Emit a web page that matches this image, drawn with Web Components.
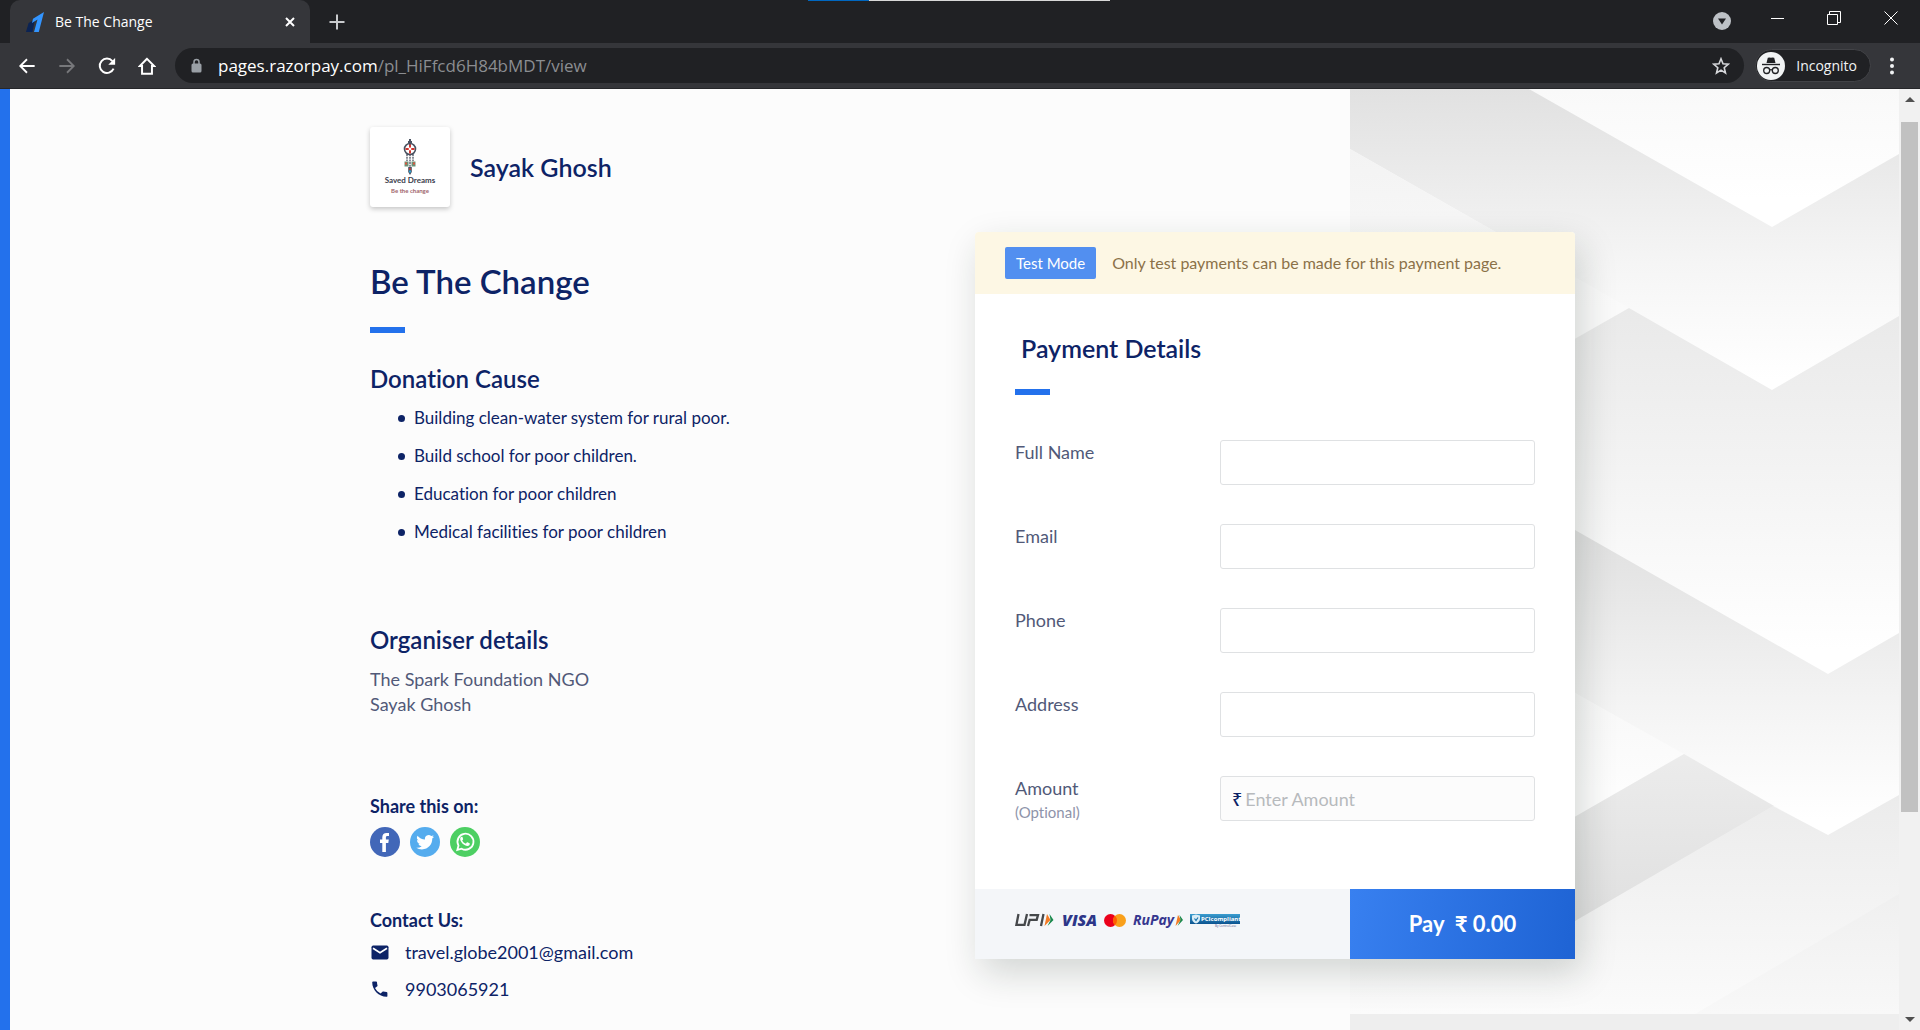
<!DOCTYPE html>
<html lang="en">
<head>
<meta charset="utf-8">
<title>Be The Change</title>
<style>
  :root {
    --navy: #0d2366;
    --blue: #2371ec;
    --muted: #515978;
    --ui-font: "Open Sans", "Noto Sans", sans-serif;
    --page-font: Lato, "Noto Sans", sans-serif;
  }
  html, body { height: 100%; margin: 0; }
  body { overflow: hidden; background: #fcfcfc; font-family: var(--page-font); font-variant-ligatures: none; }
</style>
</head>
<body>
<browser-window>
  <browser-tab slot="tabs">Be The Change</browser-tab>
  <payment-page>
    <chevron-backdrop slot="backdrop"></chevron-backdrop>
    <organiser-info slot="info"></organiser-info>
    <payment-card slot="card"></payment-card>
  </payment-page>
</browser-window>

<script>
const define = (name, html) => {
  const template = document.createElement('template');
  template.innerHTML = html;
  customElements.define(name, class extends HTMLElement {
    constructor() {
      super();
      this.attachShadow({ mode: 'open' }).append(template.content.cloneNode(true));
    }
  });
};

define('browser-tab', `
<style>
  :host { display: flex; align-items: center; box-sizing: border-box; width: 300px; height: 43px; padding: 0 13px 0 16px;
    background: #35363a; border-radius: 10px 10px 0 0; color: #fff; font-family: var(--ui-font); font-size: 14px; line-height: 20px; }
  .name { flex: 1; margin-left: 11px; }
  button { all: unset; display: flex; }
</style>
<svg width="18" height="20" viewBox="0 0 18 20"><path d="M0 20 2.600 11 9 7.500 6.500 20z" fill="#0b2353"/><path d="M18 0 12.800 20H8L11.500 7.500 6 11 7 6.800z" fill="#3395ff"/></svg>
<span class="name"><slot></slot></span>
<button aria-label="Close tab"><svg width="14" height="14" viewBox="0 0 14 14" stroke="#fff" stroke-width="2"><path d="M3 3l8 8M11 3l-8 8"/></svg></button>
`);

define('browser-window', `
<style>
  :host { display: flex; flex-direction: column; height: 100vh; }
  button { all: unset; display: flex; }
  .strip { position: relative; display: flex; align-items: center; height: 43px; padding-left: 10px; background: #202124; }
  .progress { position: absolute; top: 0; left: calc(50% - 152px); width: 302px; height: 1px; background: linear-gradient(90deg, #0067c0 61px, #d8d8d8 61px); }
  .new { margin-left: 19px; }
  .window { display: flex; align-items: center; gap: 43px; margin-left: auto; padding-right: 22px; height: 36px; align-self: flex-start; }
  .window .down { margin-top: 6px; margin-right: -3px; }
  .bar { display: flex; align-items: center; height: 45px; background: #35363a; border-bottom: 1px solid #26272a; padding: 0 25px 0 18px; }
  nav { display: flex; gap: 22px; width: 157px; }
  .address { flex: 1; display: flex; align-items: center; height: 35px; border-radius: 18px; padding: 0 14px 0 16px; background: #202124; font-family: var(--ui-font); font-size: 17px; line-height: 24px; }
  .address .url { flex: 1; margin-left: 15px; color: #8b8d91; }
  .address b { font-weight: 400; color: #fff; }
  .who { display: flex; align-items: center; gap: 11px; height: 31px; margin: 0 18px 0 11px; padding: 0 13px 0 1px; border: 1px solid #424347; border-radius: 17px; background: #202124; color: #f1f3f4; font-family: var(--ui-font); font-size: 14px; line-height: 20px; }
  .view { flex: 1; min-height: 0; display: grid; grid-template-columns: minmax(0, 1fr) 21px; }
  .scroll { display: flex; flex-direction: column; align-items: center; background: #f1f1f1; }
  .scroll button { align-items: center; }
  .scroll button:first-child { height: 21px; margin-bottom: 12px; }
  .scroll button:last-child { height: 21px; margin-top: auto; }
  .thumb { width: 17px; height: 73.3%; background: #c1c1c1; }
</style>
<div class="strip">
  <div class="progress"></div>
  <slot name="tabs"></slot>
  <button class="new" aria-label="New tab"><svg width="16" height="16" viewBox="0 0 16 16" stroke="#c8cacd" stroke-width="2"><path d="M8 .5v15M.5 8h15"/></svg></button>
  <div class="window">
    <button class="down" aria-label="Search tabs"><svg width="18" height="18" viewBox="0 0 18 18"><circle cx="9" cy="9" r="9" fill="#bdc1c6"/><path d="M5 6.500h8L9 12.500z" fill="#202124"/></svg></button>
    <button aria-label="Minimise"><svg width="13" height="13" viewBox="0 0 13 13"><path d="M0 6.500h13" stroke="#fff"/></svg></button>
    <button aria-label="Restore"><svg width="14" height="14" viewBox="0 0 14 14" fill="none" stroke="#fff"><path d="M.5 3.500h10v10H.5zM2.500 3V.5h11V11.500H11"/></svg></button>
    <button aria-label="Close"><svg width="14" height="14" viewBox="0 0 14 14" stroke="#fff"><path d="M.5.5l13 13M13.500.5l-13 13"/></svg></button>
  </div>
</div>
<div class="bar">
  <nav>
    <button aria-label="Back"><svg width="18" height="18" viewBox="0 0 20 20" fill="none" stroke="#fff" stroke-width="2"><path d="M18.500 10H3M10 2.500 2.500 10l7.500 7.500"/></svg></button>
    <button aria-label="Forward"><svg width="18" height="18" viewBox="0 0 20 20" fill="none" stroke="#77787b" stroke-width="2"><path d="M1.500 10H17M10 2.500l7.500 7.500-7.500 7.500"/></svg></button>
    <button aria-label="Reload"><svg width="18" height="18" viewBox="0 0 20 20"><path d="M17.300 13A8 8 0 1 1 16 4.500" fill="none" stroke="#fff" stroke-width="2.200"/><path d="M19 1V8.600h-7.600z" fill="#fff"/></svg></button>
    <button aria-label="Home"><svg width="18" height="18" viewBox="0 0 20 20" fill="none" stroke="#fff" stroke-width="2.200"><path d="M10 2 2 10h2.500v8.500h11V10H18z"/></svg></button>
  </nav>
  <div class="address" role="textbox" aria-label="Address">
    <svg width="12" height="16" viewBox="0 0 12 16"><rect y="5.500" x=".5" width="10" height="9" rx="1.500" fill="#9aa0a6"/><path d="M3 6V4a2.500 2.500 0 0 1 5 0v2" fill="none" stroke="#9aa0a6" stroke-width="1.500"/></svg>
    <span class="url"><b>pages.razorpay.com</b>/pl_HiFfcd6H84bMDT/view</span>
    <button aria-label="Bookmark"><svg width="18" height="18" viewBox="0 0 18 18" fill="none" stroke="#d5d7da" stroke-width="1.600"><path d="M9 1.800l2 5 5.300.4-4.100 3.500 1.300 5.300L9 13.100 4.500 16l1.300-5.300L1.700 7.200 7 6.800z"/></svg></button>
  </div>
  <button class="who"><svg width="28" height="28" viewBox="0 0 28 28"><circle cx="14" cy="14" r="14" fill="#f1f3f4"/><path d="M9.500 11l1.300-5.200q2-.8 3.200 0 1.200-.8 3.200 0L18.500 11z" fill="#202124"/><path d="M5 12.500h18" stroke="#202124" stroke-width="1.400"/><g fill="none" stroke="#202124" stroke-width="1.300"><circle cx="9.700" cy="18.500" r="3"/><circle cx="18.300" cy="18.500" r="3"/><path d="M12.700 18q1.300-.8 2.600 0"/></g></svg>Incognito</button>
  <button aria-label="Menu"><svg width="6" height="18" viewBox="0 0 6 18" fill="#f1f3f4"><circle cx="3" cy="2.500" r="2"/><circle cx="3" cy="9" r="2"/><circle cx="3" cy="15.500" r="2"/></svg></button>
</div>
<div class="view">
  <slot></slot>
  <div class="scroll">
    <button aria-label="Scroll up"><svg width="10" height="5" viewBox="0 0 10 5"><path d="M0 5 5 0l5 5z" fill="#505050"/></svg></button>
    <div class="thumb"></div>
    <button aria-label="Scroll down"><svg width="10" height="5" viewBox="0 0 10 5"><path d="M0 0l5 5 5-5z" fill="#505050"/></svg></button>
  </div>
</div>
`);

define('payment-page', `
<style>
  :host { display: grid; grid-template-columns: minmax(0, 10fr) 605px 600px minmax(0, 9fr); grid-template-rows: minmax(0, 1fr);
    box-sizing: border-box; min-height: 0; border-left: 10px solid var(--blue); background: #fcfcfc; }
  ::slotted(*) { grid-row: 1; }
  ::slotted([slot=backdrop]) { grid-column: 3 / 5; margin-left: 375px; }
  ::slotted([slot=info]) { grid-column: 2; }
  ::slotted([slot=card]) { grid-column: 3; margin-top: 143px; align-self: start; }
</style>
<slot name="backdrop"></slot><slot name="info"></slot><slot name="card"></slot>
`);

define('chevron-backdrop', `
<style>
  :host { display: flex; flex-direction: column; min-height: 0; background: #eee; }
  svg { display: block; width: 100%; height: 925px; }
</style>
<svg viewBox="0 0 549 925" preserveAspectRatio="none" aria-hidden="true">
  <defs>
    <linearGradient id="g0" gradientUnits="userSpaceOnUse" x1="400" y1="0" x2="400" y2="110"><stop stop-color="#f9f9f9"/><stop offset="1" stop-color="#fff"/></linearGradient>
    <linearGradient id="g1" gradientUnits="userSpaceOnUse" x1="0" y1="0" x2="0" y2="290"><stop stop-color="#e1e1e1"/><stop offset=".6" stop-color="#f5f5f5"/><stop offset="1" stop-color="#fff"/></linearGradient>
    <linearGradient id="g1b" gradientUnits="userSpaceOnUse" x1="0" y1="60" x2="0" y2="220"><stop stop-color="#f3f3f3"/><stop offset="1" stop-color="#fafafa"/></linearGradient>
    <linearGradient id="g2" gradientUnits="userSpaceOnUse" x1="0" y1="200" x2="0" y2="560"><stop stop-color="#e8e8e8"/><stop offset=".5" stop-color="#f3f3f3"/><stop offset="1" stop-color="#fff"/></linearGradient>
    <linearGradient id="g3" gradientUnits="userSpaceOnUse" x1="0" y1="450" x2="0" y2="730"><stop stop-color="#e1e1e1"/><stop offset=".6" stop-color="#f4f4f4"/><stop offset="1" stop-color="#fff"/></linearGradient>
    <linearGradient id="g3b" gradientUnits="userSpaceOnUse" x1="0" y1="590" x2="0" y2="700"><stop stop-color="#f7f7f7"/><stop offset="1" stop-color="#fdfdfd"/></linearGradient>
    <linearGradient id="g4" gradientUnits="userSpaceOnUse" x1="0" y1="660" x2="0" y2="830"><stop stop-color="#ececec"/><stop offset="1" stop-color="#e0e0e0"/></linearGradient>
    <linearGradient id="g5" gradientUnits="userSpaceOnUse" x1="0" y1="700" x2="0" y2="925"><stop stop-color="#ebebeb"/><stop offset="1" stop-color="#fbfbfb"/></linearGradient>
    <linearGradient id="g6" gradientUnits="userSpaceOnUse" x1="0" y1="800" x2="0" y2="925"><stop stop-color="#efefef"/><stop offset="1" stop-color="#f8f8f8"/></linearGradient>
  </defs>
  <rect width="549" height="925" fill="#fafafa"/>
  <path d="M179 0H549V66L422 139z" fill="url(#g0)"/>
  <path d="M0 0H179L422 138 549 65V228L422 302 279 219 0 60z" fill="url(#g1)"/>
  <path d="M0 60 279 219 0 378z" fill="url(#g1b)"/>
  <path d="M0 378 279 219 422 301 549 227V545L478 586 225 442 0 315z" fill="url(#g2)"/>
  <path d="M0 314 225 441 478 585 549 544V707L478 747 334 666 225 604 0 476z" fill="url(#g3)"/>
  <path d="M0 476 225 604 334 665 0 857z" fill="url(#g3b)"/>
  <path d="M0 857 334 665 424 717 225 833H0z" fill="url(#g4)"/>
  <path d="M0 832H225L423 717 478 746 549 706V925H0z" fill="url(#g5)"/>
  <path d="M345 925 549 805V925z" fill="url(#g6)"/>
</svg>
`);

define('accent-bar', `<style>:host { display: block; width: 35px; height: 6px; background: var(--blue); }</style>`);

define('brand-logo', `
<style>
  :host { display: flex; flex-direction: column; align-items: center; justify-content: center; box-sizing: border-box; width: 80px; height: 80px;
    border-radius: 3px; background: #fff; box-shadow: 0 2px 5px rgba(0, 0, 0, .22); }
  .a { font: bold 8px/11px Lato, sans-serif; color: #3b3d4c; }
  .b { font: bold 6px/9px Lato, sans-serif; color: #a0656b; }
</style>
<svg width="14" height="36" viewBox="0 0 14 36" fill="none"><circle cx="7" cy="10" r="5.500" stroke="#4a5261" stroke-width="1.600"/><path d="M7 0v7M5 3h4" stroke="#4a5261" stroke-width="2"/><path d="M7 5.500v9M2.500 10h9" stroke="#d2362f" stroke-width="2"/><circle cx="7" cy="10" r="1.400" fill="#fff"/><path d="M4 15v7M7 15v13M10 15v7" stroke="#4a5261" stroke-width="1.300" stroke-dasharray="2 .7"/><path d="M1.500 22.500h4v5h-4zM8.500 22.500h4v5h-4z" fill="#6a9177"/><path d="M2 24.500h2M10 24.500h2" stroke="#d8573f" stroke-width="2"/><path d="M5.200 28h3.600v5L7 36l-1.800-3z" fill="#4a5261"/><path d="M6 32.500h2" stroke="#2ca3d6" stroke-width="2"/><path d="M6 30h2" stroke="#d2362f" stroke-width="1.500"/></svg>
<span class="a">Saved Dreams</span>
<span class="b">Be the change</span>
`);

define('organiser-info', `
<style>
  :host { display: block; padding-top: 38px; color: var(--navy); font-family: var(--page-font); font-size: 18px; line-height: 24px; }
  h1, h2, h3, p, ul { margin: 0; font-weight: 400; }
  header { display: flex; align-items: center; gap: 20px; }
  .name { font-size: 25px; line-height: 32px; font-weight: 600; }
  h1 { margin: 54px 0 26px; font-size: 33px; line-height: 40px; font-weight: 600; }
  h2 { margin-top: 30px; font-size: 24px; line-height: 32px; font-weight: 600; }
  h2.org { margin-top: 80px; }
  ul { display: grid; gap: 14px; margin-top: 11px; padding: 0 0 0 28px; list-style: none; font-size: 17px; }
  li { display: flex; align-items: center; gap: 9px; }
  li::before { content: ""; width: 7px; height: 7px; border-radius: 50%; background: var(--navy); }
  p { margin-top: 11px; line-height: 25px; color: var(--muted); }
  h3 { font-size: 18px; line-height: 24px; font-weight: 700; }
  .share { margin: 77px 0 9px; }
  .links { display: flex; gap: 10px; }
  a { color: inherit; text-decoration: none; display: flex; align-items: center; }
  .contact { margin-top: 51px; }
  address { display: grid; gap: 13px; margin-top: 8px; font-style: normal; }
  address a { gap: 15px; }
</style>
<header><brand-logo></brand-logo><span class="name">Sayak Ghosh</span></header>
<h1>Be The Change</h1>
<accent-bar></accent-bar>
<h2>Donation Cause</h2>
<ul>
  <li>Building clean-water system for rural poor.</li>
  <li>Build school for poor children.</li>
  <li>Education for poor children</li>
  <li>Medical facilities for poor children</li>
</ul>
<h2 class="org">Organiser details</h2>
<p>The Spark Foundation NGO<br>Sayak Ghosh</p>
<h3 class="share">Share this on:</h3>
<div class="links">
  <a href="#facebook" aria-label="Facebook"><svg width="30" height="30" viewBox="0 0 30 30"><circle cx="15" cy="15" r="15" fill="#4267b8"/><path d="M12.300 25v-9H10v-3.600h2.300V10.200c0-2.900 1.700-4.300 4.200-4.300 1 0 1.900.1 2.500.2v3h-1.500c-1.200 0-1.600.6-1.600 1.500v1.800h2.900l-.5 3.600h-2.400v9z" fill="#fff"/></svg></a>
  <a href="#twitter" aria-label="Twitter"><svg width="30" height="30" viewBox="0 0 30 30"><circle cx="15" cy="15" r="15" fill="#55acee"/><path transform="translate(6.300 6.300) scale(.74)" d="M23.950 4.570a10 10 0 0 1-2.820.77 4.960 4.960 0 0 0 2.160-2.720c-.95.550-2 .95-3.130 1.180a4.920 4.920 0 0 0-8.380 4.480C7.690 8.100 4.070 6.130 1.640 3.160a4.920 4.920 0 0 0 1.520 6.570 4.900 4.900 0 0 1-2.230-.61v.06a4.920 4.920 0 0 0 3.950 4.830 5 5 0 0 1-2.210.08 4.940 4.940 0 0 0 4.600 3.420A9.870 9.870 0 0 1 0 19.540a13.990 13.990 0 0 0 7.550 2.210c9.050 0 14-7.500 14-13.980 0-.21 0-.42-.02-.63a9.940 9.940 0 0 0 2.460-2.550z" fill="#fff"/></svg></a>
  <a href="#whatsapp" aria-label="WhatsApp"><svg width="30" height="30" viewBox="0 0 30 30"><circle cx="15" cy="15" r="15" fill="#4dcf63"/><path d="M7.300 22.900l1.200-4.300a8 8 0 1 1 3.100 3.100z" fill="none" stroke="#fff" stroke-width="1.800"/><path d="M12.600 10.300c-.3-.6-.7-.6-1.100-.5-.8.300-1.300 1.100-1.300 2.100 0 3 4.200 7 7.200 7 1.300 0 2.300-.8 2.400-2 0-.3 0-.5-.3-.7l-2-.9c-.3-.1-.5-.1-.7.200l-.8 1c-.2.200-.4.200-.6.100a7 7 0 0 1-3.100-2.800c-.1-.3-.1-.4.100-.6.500-.5.900-1 .7-1.300z" fill="#fff"/></svg></a>
</div>
<h3 class="contact">Contact Us:</h3>
<address>
  <a href="mailto:travel.globe2001@gmail.com"><svg width="20" height="20" viewBox="0 0 20 20"><rect x="1.500" y="3.500" width="17" height="14" rx="1.700" fill="#0d2366"/><path d="M3 6.200l7 4.500 7-4.500" fill="none" stroke="#fff" stroke-width="1.700"/></svg>travel.globe2001@gmail.com</a>
  <a href="tel:9903065921"><svg width="20" height="20" viewBox="0 0 20 20"><path d="M5 9a12 12 0 0 0 5.600 5.600l1.900-1.900c.2-.2.600-.3.900-.2 1 .3 2 .5 3.100.5.500 0 .9.400.9.900v3c0 .5-.4.900-.9.900C8.800 17.800 2.200 11.200 2.200 3.300c0-.5.400-.9.900-.9h3c.5 0 .9.400.9.900 0 1.100.2 2.100.5 3.100.1.300 0 .7-.2.900z" fill="#0d2366"/></svg>9903065921</a>
</address>
`);

class FormField extends HTMLElement {
  connectedCallback() {
    if (this.shadowRoot) return;
    const get = name => this.getAttribute(name) || '';
    this.attachShadow({ mode: 'open' }).innerHTML = `
<style>
  :host { display: grid; grid-template-columns: 205px minmax(0, 1fr); height: 45px; font-family: var(--page-font); font-size: 18px; line-height: 24px; color: var(--muted); }
  label small { display: block; font-size: 15px; line-height: 24px; color: #8e94aa; }
  .box { display: flex; align-items: center; box-sizing: border-box; height: 45px; padding: 0 11px; border: 1px solid #dfe1e3; border-radius: 3px; background: #fff; }
  :host([prefix]) .box { background: #fcfcfc; }
  .box span { color: var(--navy); font-family: "Noto Sans", sans-serif; font-size: 18px; font-weight: 500; margin-right: 3px; }
  input { all: unset; flex: 1; min-width: 0; color: var(--navy); font-family: var(--page-font); font-size: 18px; line-height: 24px; }
  input::placeholder { color: #b7babd; }
</style>
<label for="control">${get('label')}${get('hint') ? `<small>${get('hint')}</small>` : ''}</label>
<div class="box">${get('prefix') ? `<span>${get('prefix')}</span>` : ''}<input id="control" type="${get('type') || 'text'}" placeholder="${get('placeholder')}"></div>`;
  }
}
customElements.define('form-field', FormField);

define('payment-methods', `
<style>
  :host { display: block; }
  svg { display: block; overflow: visible; }
</style>
<svg width="226" height="26" viewBox="0 -6 226 26">
  <g fill="none" stroke="#45484b" stroke-width="2.300"><path d="M3.500 0 1.400 10.800H9.500L12 0M13 12 14.700 5.800H21.700L23 1.100H14.500M28.500 0 26 12"/></g>
  <path d="M32 0l3.500 6L29.500 12z" fill="#f47b25"/><path d="M34.500 0l4 6-6 6 3-6z" fill="#19894d"/>
  <text x="47" y="12" font-family="Open Sans, sans-serif" font-weight="800" font-style="italic" font-size="16" fill="#2c3689">VISA</text>
  <circle cx="95.500" cy="6.500" r="6.500" fill="#eb001b"/><circle cx="104.500" cy="6.500" r="6.500" fill="#f9a01b"/><path d="M100 1.800a6.500 6.500 0 0 1 0 9.400 6.500 6.500 0 0 1 0-9.400z" fill="#ff5f00"/>
  <text x="118" y="11" font-family="Open Sans, sans-serif" font-weight="700" font-style="italic" font-size="14" fill="#36378f">RuPay</text>
  <path d="M163 1l3 5-5.500 6z" fill="#f47b25"/><path d="M164.500 1l3.500 5-5.500 6 3-6z" fill="#19894d"/>
  <defs><linearGradient id="pci" x2="0" y2="1"><stop stop-color="#3b9dd0"/><stop offset="1" stop-color="#0b5390"/></linearGradient></defs>
  <rect x="175" width="50" height="10" fill="url(#pci)"/>
  <path d="M177 1.500l4-1 4 1v3q0 3.500-4 5-4-1.500-4-5z" fill="#d9edf7"/><path d="M179.500 4.500l1.500 2 2-3" fill="none" stroke="#1873ae" stroke-width="1.200"/>
  <text x="186" y="7" font-family="Open Sans, sans-serif" font-weight="700" font-size="6" fill="#fff">PCIcompliant</text>
  <text x="200" y="13" font-family="Open Sans, sans-serif" font-size="3" fill="#5b6390">By ControlCase</text>
</svg>
`);

define('payment-card', `
<style>
  :host { display: block; border-radius: 4px 4px 0 0; background: #fff; box-shadow: 6px 14px 36px rgba(20, 40, 30, .18); font-family: var(--page-font); }
  .banner { display: flex; align-items: center; gap: 16px; height: 62px; padding: 0 30px; border-radius: 4px 4px 0 0; background: #fdf7e4; color: #8b7148; font-size: 16px; line-height: 20px; }
  .banner strong { padding: 6px 11px; border-radius: 2px; background: #528ff0; color: #fff; font-size: 15px; font-weight: 400; }
  form { display: block; }
  .body { padding: 38px 40px 68px; }
  h2 { margin: 0 0 25px 6px; font-size: 25px; line-height: 32px; font-weight: 600; color: var(--navy); }
  .fields { display: grid; gap: 39px; margin-top: 45px; }
  footer { display: flex; height: 70px; background: #f4f6f9; }
  payment-methods { flex: 1; padding: 19px 0 0 40px; }
  button { all: unset; width: 225px; text-align: center; color: #fff; font: bold 22px/24px Lato, "Noto Sans", sans-serif; background: linear-gradient(100deg, #3880f0, #1e63d4); white-space: pre; }
</style>
<form>
  <div class="banner"><strong>Test Mode</strong><span>Only test payments can be made for this payment page.</span></div>
  <div class="body">
    <h2>Payment Details</h2>
    <accent-bar></accent-bar>
    <div class="fields">
      <form-field label="Full Name"></form-field>
      <form-field label="Email" type="email"></form-field>
      <form-field label="Phone" type="tel"></form-field>
      <form-field label="Address"></form-field>
      <form-field label="Amount" hint="(Optional)" prefix="₹" placeholder="Enter Amount"></form-field>
    </div>
  </div>
  <footer>
    <payment-methods></payment-methods>
    <button type="button">Pay  ₹ 0.00</button>
  </footer>
</form>
`);
</script>
</body>
</html>
